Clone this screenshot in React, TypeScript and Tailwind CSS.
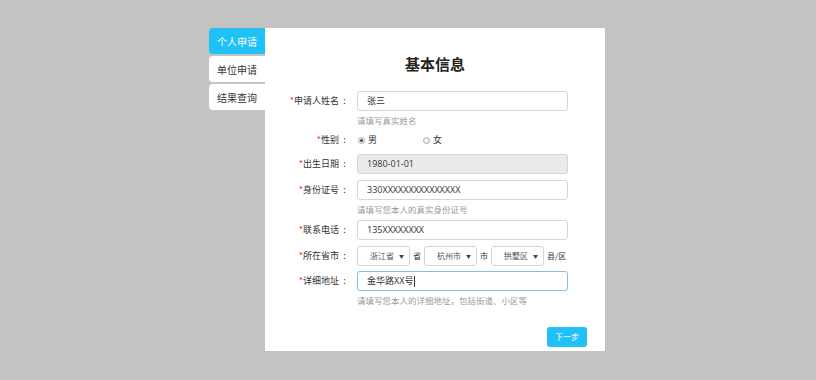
import React from 'react';

const font = { fontFamily: '"Open Sans", "Noto Sans CJK SC", sans-serif' };
const cjk = { fontFamily: '"Noto Sans CJK SC", sans-serif' };

const Label = ({ text }: { text: string }) => (
  <div className="flex w-[85px] shrink-0 justify-end text-[9px] leading-[14px] text-[#333]" style={cjk}>
    <span className="text-[#e4393c]">*</span>
    <span>{text}</span>
    <span className="w-[11px] text-center">:</span>
  </div>
);

const Field = ({ children }: { children: React.ReactNode }) => (
  <div className="flex items-center gap-[7px]">{children}</div>
);

const TextBox = ({ value, disabled, focused }: { value: string; disabled?: boolean; focused?: boolean }) => (
  <div
    className={`flex h-[20px] w-[211px] items-center rounded-[3px] border pl-[9px] text-[9px] text-[#333] ${
      disabled ? 'border-[#d6d6d6] bg-[#ebebeb]' : focused ? 'border-[#7fbdf0] bg-white' : 'border-[#d6d6d6] bg-white'
    }`}
  >
    {value}
    {focused && <span className="ml-[1px] h-[11px] w-px bg-[#333]" />}
  </div>
);

const Hint = ({ text, className }: { text: string; className: string }) => (
  <div className={`pl-[92px] text-[8.5px] leading-[14px] text-[#9a9a9a] ${className}`} style={cjk}>
    {text}
  </div>
);

const Select = ({ value }: { value: string }) => (
  <div className="flex h-[20px] w-[53px] items-center justify-between rounded-[3px] border border-[#d6d6d6] bg-white pl-[12px] pr-[5px] text-[8px] text-[#555]">
    <span>{value}</span>
    <span className="text-[5px] text-[#444]">▼</span>
  </div>
);

const Radio = ({ checked, label }: { checked?: boolean; label: string }) => (
  <div className="flex w-[65px] items-center gap-[3px] pl-[1px] text-[9px] text-[#333]">
    <span className="flex h-[7px] w-[7px] items-center justify-center rounded-full border border-[#aaa] bg-[#f2f2f2]">
      {checked && <span className="h-[3px] w-[3px] rounded-full bg-[#444]" />}
    </span>
    {label}
  </div>
);

const tabs = ['个人申请', '单位申请', '结果查询'];

export default function App() {
  return (
    <div className="flex h-[380px] w-full justify-center bg-[#c3c3c3] pr-[2px] pt-[28px]" style={font}>
      <div className="flex">
        {/* Tabs */}
        <div className="flex w-[56px] flex-col gap-[2px]" style={cjk}>
          {tabs.map((t, i) => (
            <div
              key={t}
              className={`flex h-[26px] items-center rounded-l-[4px] pl-[8px] text-[10px] ${
                i === 0 ? 'bg-[#1fc1f6] text-white' : 'bg-white text-[#333]'
              }`}
            >
              {t}
            </div>
          ))}
        </div>

        {/* Card */}
        <div className="flex h-[323px] w-[340px] flex-col bg-white">
          <div className="mt-[27px] text-center text-[15px] font-bold leading-[18px] text-[#222]" style={cjk}>
            基本信息
          </div>

          <div className="mt-[18px]">
            <Field>
              <Label text="申请人姓名" />
              <TextBox value="张三" />
            </Field>
          </div>
          <Hint text="请填写真实姓名" className="mt-[2px]" />

          <div className="mt-[6px]">
            <Field>
              <Label text="性别" />
              <div className="flex" style={cjk}>
                <Radio checked label="男" />
                <Radio label="女" />
              </div>
            </Field>
          </div>

          <div className="mt-[7px]">
            <Field>
              <Label text="出生日期" />
              <TextBox value="1980-01-01" disabled />
            </Field>
          </div>

          <div className="mt-[6px]">
            <Field>
              <Label text="身份证号" />
              <TextBox value="330XXXXXXXXXXXXXXX" />
            </Field>
          </div>
          <Hint text="请填写您本人的真实身份证号" className="mt-[2px]" />

          <div className="mt-[4px]">
            <Field>
              <Label text="联系电话" />
              <TextBox value="135XXXXXXXX" />
            </Field>
          </div>

          <div className="mt-[6px]">
            <Field>
              <Label text="所在省市" />
              <div className="flex items-center gap-[3px] text-[8px] text-[#333]" style={cjk}>
                <Select value="浙江省" />
                <span>省</span>
                <Select value="杭州市" />
                <span>市</span>
                <Select value="拱墅区" />
                <span>县/区</span>
              </div>
            </Field>
          </div>

          <div className="mt-[5px]">
            <Field>
              <Label text="详细地址" />
              <TextBox value="金华路XX号" focused />
            </Field>
          </div>
          <Hint text="请填写您本人的详细地址，包括街道、小区等" className="mt-[2px]" />

          <div className="mt-[20px] flex justify-end pr-[18px]">
            <button className="h-[20px] w-[40px] rounded-[3px] bg-[#1fc1f6] text-[8px] text-white" style={cjk}>
              下一步
            </button>
          </div>
        </div>
      </div>
    </div>
  );
}
